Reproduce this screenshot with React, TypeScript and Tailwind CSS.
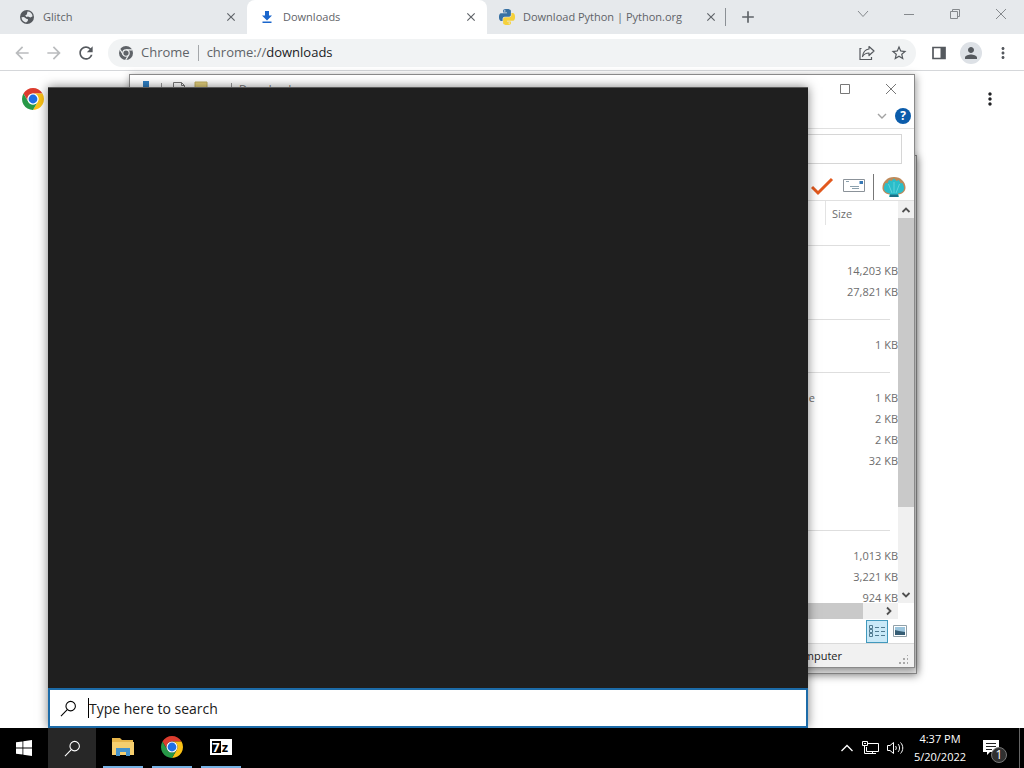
import React from "react";
import {
  MdClose,
  MdAdd,
  MdArrowBack,
  MdArrowForward,
  MdRefresh,
  MdStarBorder,
  MdPerson,
  MdMoreVert,
} from "react-icons/md";

const PYTHON_SNAKE =
  "M14.25.18l.9.2.73.26.59.3.45.32.34.34.25.34.16.33.1.3.04.26.02.2-.01.13V8.5l-.05.63-.13.55-.21.46-.26.38-.3.31-.33.25-.35.19-.35.14-.33.1-.3.07-.26.04-.21.02H8.77l-.69.05-.59.14-.5.22-.41.27-.33.32-.27.35-.2.36-.15.37-.1.35-.07.32-.04.27-.02.21v3.06H3.17l-.21-.03-.28-.07-.32-.12-.35-.18-.36-.26-.36-.36-.35-.46-.32-.59-.28-.73-.21-.88-.14-1.05-.05-1.23.06-1.22.16-1.04.24-.87.32-.71.36-.57.4-.44.42-.33.42-.24.4-.16.36-.1.32-.05.24-.01h.16l.06.01h8.16v-.83H6.18l-.01-2.75-.02-.37.05-.34.11-.31.17-.28.25-.26.31-.23.38-.2.44-.18.51-.15.58-.12.64-.1.71-.06.77-.04.84-.02 1.27.05zm-6.3 1.98l-.23.33-.08.41.08.41.23.34.33.22.41.09.41-.09.33-.22.23-.34.08-.41-.08-.41-.23-.33-.33-.22-.41-.09-.41.09z";

function PythonLogo() {
  return (
    <svg viewBox="0 0 24 24" className="size-4 shrink-0">
      <path fill="#3871a3" d={PYTHON_SNAKE} />
      <path fill="#f5d13c" d={PYTHON_SNAKE} transform="rotate(180 12 12)" />
    </svg>
  );
}

function Globe() {
  return (
    <svg viewBox="0 0 16 16" className="size-4 shrink-0">
      <circle cx="8" cy="8" r="7" fill="#55595e" />
      <path
        fill="#e6e9ec"
        d="M8.500 2.500C11 2.500 13.300 4.500 13.600 7.300L11.500 8.500 9 7.500 7.500 8 6.200 6.500 7.800 5.500zM2.500 8.200L5 8l2.300 1.700L9 10.200 8.800 12 7 13.400C4.400 13 2.600 10.900 2.500 8.200z"
      />
    </svg>
  );
}

function ChromeLogo({ className }: { className: string }) {
  return (
    <svg viewBox="0 0 48 48" className={className}>
      <path fill="#dc3c2e" d="M24 12H44.78A24 24 0 0 0 3.22 12L13.61 30A12 12 0 0 1 24 12Z" />
      <path fill="#fbc116" d="M34.39 30L24 48A24 24 0 0 0 44.78 12H24A12 12 0 0 1 34.39 30Z" />
      <path fill="#279847" d="M13.61 30L3.22 12A24 24 0 0 0 24 48L34.39 30A12 12 0 0 1 13.61 30Z" />
      <circle cx="24" cy="24" r="12" fill="#fff" />
      <circle cx="24" cy="24" r="9.6" fill="#1f6fe5" />
    </svg>
  );
}

function ChromeMono() {
  return (
    <svg viewBox="0 0 48 48" className="size-3.5 shrink-0">
      <circle cx="24" cy="24" r="24" fill="#5f6368" />
      <path d="M24 13H46M14.5 29.5L3 11M33.5 29.5L23 48" stroke="#f1f3f4" strokeWidth="4" />
      <circle cx="24" cy="24" r="11" fill="#5f6368" stroke="#f1f3f4" strokeWidth="4" />
    </svg>
  );
}

function DownloadGlyph() {
  return (
    <svg viewBox="0 0 16 16" className="size-4 shrink-0" fill="#1a66cc">
      <path d="M6 2h4v4.500h3L8 11.500 3 6.500h3zM3.500 12.500h9V14h-9z" />
    </svg>
  );
}

function Magnifier({ className }: { className: string }) {
  return (
    <svg viewBox="0 0 18 18" className={className} fill="none" stroke="currentColor" strokeWidth="1.150">
      <circle cx="11.300" cy="6.500" r="5" />
      <path d="M7.700 10.200L1 17" />
    </svg>
  );
}

const TABS = [
  { title: "Glitch", icon: <Globe />, active: false },
  { title: "Downloads", icon: <DownloadGlyph />, active: true },
  { title: "Download Python | Python.org", icon: <PythonLogo />, active: false },
];

function TabStrip() {
  return (
    <div className="flex h-[34px] bg-[#e6e9ec] pl-[7px] text-[#5f6368]">
      {TABS.map((t) => (
        <div
          key={t.title}
          className={
            t.active
              ? "flex w-60 items-center gap-2 rounded-t-lg bg-white pr-2 pl-3"
              : "flex w-60 items-center gap-2 pr-2 pl-3"
          }
        >
          {t.icon}
          <span className="flex-1 truncate text-[11px]">{t.title}</span>
          <button aria-label={`Close ${t.title}`} className="flex size-4 items-center justify-center">
            <MdClose className="size-[14px]" />
          </button>
        </div>
      ))}
      <div className="my-2 -ml-0.5 w-px bg-[#8b9095]" />
      <button aria-label="New tab" className="ml-3 flex w-5 items-center justify-center">
        <MdAdd className="size-5" />
      </button>
      <div className="ml-auto flex h-7 text-[#85898d]">
        <button aria-label="Search tabs" className="flex w-[46px] items-center justify-center">
          <svg viewBox="0 0 12 12" className="size-3" fill="none" stroke="currentColor">
            <path d="M1 3l5 5.500L11 3" />
          </svg>
        </button>
        <button aria-label="Minimize" className="flex w-[46px] items-center justify-center">
          <svg viewBox="0 0 12 12" className="size-3" stroke="currentColor">
            <path d="M1 6.500h10" />
          </svg>
        </button>
        <button aria-label="Restore" className="flex w-[46px] items-center justify-center">
          <svg viewBox="0 0 12 12" className="size-3" fill="none" stroke="currentColor">
            <path d="M1.500 3.500h7v7h-7zM3.500 3.500v-2h7v7h-2" />
          </svg>
        </button>
        <button aria-label="Close window" className="flex w-[46px] items-center justify-center">
          <svg viewBox="0 0 12 12" className="size-3" stroke="currentColor">
            <path d="M1 1l10 10M11 1L1 11" />
          </svg>
        </button>
      </div>
    </div>
  );
}

function Toolbar() {
  return (
    <div className="flex h-[37px] items-center border-b border-[#d5d7da] bg-white pt-px pr-3 pl-3 text-[#55595e]">
      <button aria-label="Back" className="mr-3 text-[#babcbe]">
        <MdArrowBack className="size-5" />
      </button>
      <button aria-label="Forward" className="mr-3 text-[#babcbe]">
        <MdArrowForward className="size-5" />
      </button>
      <button aria-label="Reload" className="mr-3">
        <MdRefresh className="size-5" />
      </button>
      <div className="flex h-7 flex-1 items-center rounded-full bg-[#f1f3f4] pr-2 pl-[11px] text-[13px]">
        <ChromeMono />
        <span className="ml-2 text-[#5f6368]">Chrome</span>
        <span className="mx-2 h-4 w-px bg-[#a4a7aa]" />
        <span className="text-[#5f6368]">
          chrome://<span className="text-[#202124]">downloads</span>
        </span>
        <button aria-label="Share" className="mr-3.5 ml-auto">
          <svg viewBox="0 0 18 18" className="size-[18px]" fill="none" stroke="currentColor" strokeWidth="1.200">
            <path d="M3.500 4.500H2v11h11.500V13" />
            <path d="M11 2.500l5 4.500-5 4.500V9C8 9 6 10 4.500 12.500 5 8.500 7 5.500 11 5z" strokeLinejoin="round" />
          </svg>
        </button>
        <button aria-label="Bookmark">
          <MdStarBorder className="size-[18px]" />
        </button>
      </div>
      <button aria-label="Side panel" className="ml-3.5">
        <svg viewBox="0 0 18 18" className="size-[18px]">
          <path d="M3 3.500h12v11H3z" fill="none" stroke="currentColor" strokeWidth="1.700" />
          <path d="M10.500 3.500H15v11h-4.500z" fill="currentColor" />
        </svg>
      </button>
      <button
        aria-label="Profile"
        className="ml-3 flex size-[22px] items-center justify-center rounded-full bg-[#dde1e6]"
      >
        <MdPerson className="size-[18px]" />
      </button>
      <button aria-label="Menu" className="ml-3">
        <MdMoreVert className="size-[18px]" />
      </button>
    </div>
  );
}

type Row = { line: true } | { line?: false; type?: string; size?: string };

const ROWS: Row[] = [
  { line: true },
  { size: "14,203 KB" },
  { size: "27,821 KB" },
  { line: true },
  { size: "1 KB" },
  { line: true },
  { type: "e", size: "1 KB" },
  { size: "2 KB" },
  { size: "2 KB" },
  { size: "32 KB" },
  {},
  {},
  { line: true },
  { size: "1,013 KB" },
  { size: "3,221 KB" },
  { size: "924 KB" },
];

function FileList() {
  return (
    <table className="w-full table-fixed border-collapse text-[11px] text-[#6d6d6d]">
      <thead>
        <tr className="h-[27px]">
          <th aria-label="Type" />
          <th className="w-[73px] p-0 text-left align-top font-normal">
            <div className="h-6 border-l border-[#e3e3e3] pl-1.5 leading-[26px]">Size</div>
          </th>
        </tr>
      </thead>
      <tbody>
        {ROWS.map((r, i) =>
          r.line ? (
            <tr key={i} className="h-8">
              <td colSpan={2} className="p-0 pt-0.5 pr-2">
                <div className="h-px bg-[#dedede]" />
              </td>
            </tr>
          ) : (
            <tr key={i} className="h-[21px]">
              <td className="p-0 pr-2.5 text-right leading-3">{r.type}</td>
              <td className="p-0 text-right leading-3 whitespace-nowrap">{r.size}</td>
            </tr>
          )
        )}
      </tbody>
    </table>
  );
}

function ExplorerWindow() {
  return (
    <section
      aria-label="Downloads folder"
      className="absolute top-[74px] right-[109px] left-[129px] flex h-[594px] flex-col border border-[#8a8a8a] bg-white shadow-[1px_2px_8px_rgba(0,0,0,0.4)]"
    >
      <header className="flex h-7 items-center pl-2.5 text-[#777]">
        <svg viewBox="0 0 93 16" className="h-4 w-[93px]">
          <path d="M3 0h6v14H3z" fill="#2e7fc4" />
          <path d="M21.500 2v12M91.500 2v12" stroke="#999" />
          <path d="M33.500 1.500h8l3 3v11h-11zM41.500 1.500v3h3" fill="#fff" stroke="#777" />
          <path d="M55 1h12v12H55z" fill="#e3cf7b" stroke="#c0ae60" />
        </svg>
        <span className="ml-1.5 text-[11px] leading-4">Downloads</span>
        <button aria-label="Maximize" className="ml-auto flex w-[46px] justify-center">
          <svg viewBox="0 0 12 12" className="size-3" fill="none" stroke="currentColor">
            <path d="M1.500 1.500h9v9h-9z" />
          </svg>
        </button>
        <button aria-label="Close" className="flex w-[46px] justify-center">
          <svg viewBox="0 0 12 12" className="size-3" stroke="currentColor">
            <path d="M1 1l10 10M11 1L1 11" />
          </svg>
        </button>
      </header>
      <div className="flex h-[26px] items-center justify-end gap-2 border-b border-[#e0e0e0] pr-[3px]">
        <button aria-label="Expand ribbon">
          <svg viewBox="0 0 10 10" className="size-2.5" fill="none" stroke="#a2a2a2" strokeWidth="1.400">
            <path d="M1 3l4 4 4-4" />
          </svg>
        </button>
        <button
          aria-label="Help"
          className="flex size-4 items-center justify-center rounded-full bg-[#0b5cab] text-[12px] font-bold text-white"
        >
          ?
        </button>
      </div>
      <div className="pt-[5px] pr-3">
        <input aria-label="Search Downloads" className="block h-[30px] w-full border border-[#d6d6d6]" />
      </div>
      <div className="flex h-[37px] items-end justify-end border-b border-[#e0e0e0] pr-2">
        <button aria-label="Properties" className="mr-2 mb-1">
          <svg viewBox="0 0 24 20" className="h-5 w-6">
            <path d="M1 11l6 6L21 3" fill="none" stroke="#e2591e" strokeWidth="3" />
          </svg>
        </button>
        <button aria-label="Rename" className="mr-2 mb-1.5">
          <svg viewBox="0 0 22 16" className="h-4 w-[22px]">
            <path d="M.5 1.500h21v12H.5z" fill="#fff" stroke="#8b9299" />
            <path d="M3 3.500h3M7 8.500h9M9 10.500h7" stroke="#8ba0ad" />
            <path d="M16.500 3h3.500v3h-3.500z" fill="#3778b5" />
          </svg>
        </button>
        <div className="mr-2 h-[26px] w-px self-end bg-[#777]" />
        <button aria-label="Classic shell" className="mb-0.5">
          <svg viewBox="0 0 24 22" className="h-[22px] w-6">
            <path
              d="M7 21l1-2.500C3 18 0 15 .5 11 .8 6 5 1 12 1s11.200 5 11.500 10c.3 4-2.500 7-7.500 7.500l1 2.500z"
              fill="#bd8a5a"
            />
            <path
              d="M7 21l1-3.500C4 17 1.500 14.500 2 11l1.500-4 2 .2L7 4l2.500 1L12 2.500 14.500 5 17 4l1.500 3.200 2-.2L22 11c.5 3.500-2 6-6 6.500l1 3.500z"
              fill="#2bbdc9"
            />
            <path d="M12 17V6M10 17L6.500 8M14 17l3.500-9" stroke="#5fd3dc" fill="none" />
            <path d="M8 18.500h8V21H8z" fill="#1b7188" />
          </svg>
        </button>
      </div>
      <div className="flex min-h-0 flex-1">
        <div className="flex-1 overflow-hidden">
          <FileList />
        </div>
        <div className="flex w-4 flex-col items-center bg-[#f0f0f0]">
          <svg viewBox="0 0 10 17" className="h-[17px] w-2.5" fill="none" stroke="#505050" strokeWidth="1.800">
            <path d="M1.500 11L5 7.500 8.500 11" />
          </svg>
          <div className="h-[289px] w-full bg-[#c9c9c9]" />
          <svg viewBox="0 0 10 17" className="mt-auto h-[17px] w-2.5" fill="none" stroke="#505050" strokeWidth="1.800">
            <path d="M1.500 7L5 10.500 8.500 7" />
          </svg>
        </div>
      </div>
      <div className="mr-4 flex h-4 items-center justify-end bg-[#f0f0f0]">
        <div className="mr-[19px] h-full flex-1 bg-[#c9c9c9]" />
        <svg viewBox="0 0 16 16" className="size-4" fill="none" stroke="#505050" strokeWidth="1.800">
          <path d="M5 4.500L8.500 8 5 11.500" />
        </svg>
      </div>
      <div className="flex h-6 items-center justify-end gap-1 pr-[7px]">
        <button
          aria-label="Details view"
          className="flex h-[23px] w-[22px] items-center justify-center border border-[#4299bd] bg-[#c9e9f8]"
        >
          <svg viewBox="0 0 18 14" className="h-3.5 w-[18px]" fill="none" stroke="#507b91">
            <path d="M1.500 1.500h3v3h-3zM1.500 5.500h3v3h-3zM1.500 9.500h3v3h-3zM7 3.500h4M7 7.500h4M7 11.500h4M13 3.500h4M13 7.500h4M13 11.500h4" />
          </svg>
        </button>
        <button aria-label="Icon view" className="flex w-[15px] justify-center">
          <svg viewBox="0 0 14 12" className="h-3 w-3.5">
            <path d="M.5.5h13v11H.5z" fill="#fff" stroke="#91a0a8" />
            <path d="M2 2h10v8H2z" fill="#9cc5dd" />
            <path d="M2 5l4 1 6 1v3H2z" fill="#365d74" />
          </svg>
        </button>
      </div>
      <footer className="flex h-6 items-center border-t border-[#dadada] bg-[#f1f1f1] text-[11px] text-[#222]">
        <span className="ml-auto pt-px pr-14">Computer</span>
        <svg viewBox="0 0 12 12" className="mt-2 mr-1 size-3" fill="#a9a9a9">
          <path d="M9 1h1v1H9zM9 4h1v2H9zM9 8h1v2H9zM5 4h2v2H5zM5 8h2v2H5zM1 8h2v2H1z" />
        </svg>
      </footer>
    </section>
  );
}

function SearchPanel() {
  return (
    <section
      aria-label="Search"
      className="absolute top-[87px] right-[216px] bottom-0 left-12 flex flex-col border-t border-[#5a5a5a] bg-[#1f1f1f] shadow-[0_0_10px_rgba(0,0,0,0.5)]"
    >
      <div className="flex-1" />
      <label className="flex h-10 items-center border-2 border-[#1c6ba8] bg-white pl-2.5 text-black">
        <Magnifier className="size-[17px]" />
        <span className="ml-[11px] h-5 w-px bg-black" />
        <input
          aria-label="Type here to search"
          placeholder="Type here to search"
          className="min-w-0 flex-1 text-[14px] outline-none placeholder:text-[#1a1a1a]"
        />
      </label>
    </section>
  );
}

function Taskbar() {
  return (
    <footer className="flex h-10 shrink-0 bg-black text-white">
      <button aria-label="Start" className="flex w-12 items-center justify-center">
        <svg viewBox="0 0 16 16" className="size-4" fill="#fff">
          <path d="M0 2.300l6.500-.9v6.200H0zM7.300 1.300L16 0v7.600H7.300zM0 8.400h6.500v6.200L0 13.700zM7.300 8.400H16V16l-8.700-1.300z" />
        </svg>
      </button>
      <button aria-label="Search" className="mr-0.5 flex w-12 items-center justify-center bg-[#272727]">
        <Magnifier className="size-[17px]" />
      </button>
      <button aria-label="File Explorer" className="flex w-[49px] flex-col items-center">
        <span className="flex flex-1 items-center">
          <svg viewBox="0 0 22 20" className="h-5 w-[22px]">
            <path d="M0 1h8l2 2h11v15H0z" fill="#e8b64a" />
            <path d="M0 5h22v13H0z" fill="#f6cf6f" />
            <path d="M4 11h14v8h-4v-4H8v4H4z" fill="#4593cc" />
          </svg>
        </span>
        <span className="h-0.5 w-10 bg-[#76b1e4]" />
      </button>
      <button aria-label="Google Chrome" className="flex w-[49px] flex-col items-center">
        <span className="flex flex-1 items-center">
          <ChromeLogo className="size-[22px]" />
        </span>
        <span className="h-0.5 w-10 bg-[#76b1e4]" />
      </button>
      <button aria-label="7-Zip" className="flex w-[49px] flex-col items-center">
        <span className="flex flex-1 items-center">
          <span className="flex h-4 w-[22px] items-stretch border-2 border-white bg-white leading-3 font-bold">
            <span className="flex-1 bg-black text-center text-[13px] text-white">7</span>
            <span className="flex-1 text-center text-[13px] text-black">z</span>
          </span>
        </span>
        <span className="h-0.5 w-10 bg-[#76b1e4]" />
      </button>
      <div className="ml-auto flex items-center">
        <button aria-label="Show hidden icons" className="mr-2">
          <svg viewBox="0 0 14 14" className="size-3.5" fill="none" stroke="#fff" strokeWidth="1.300">
            <path d="M1.500 10L7 4.500 12.500 10" />
          </svg>
        </button>
        <button aria-label="Network" className="mr-2">
          <svg viewBox="0 0 17 16" className="h-4 w-[17px]" fill="none" stroke="#fff">
            <path d="M5.500 3.500h11v8H4.500V7M10.500 11.500v2M6 13.500h8M.5 1.500h5v4h-5zM2.500 5.500v8h4M2 3.500h2" />
          </svg>
        </button>
        <button aria-label="Volume">
          <svg viewBox="0 0 17 16" className="h-4 w-[17px]" fill="none" stroke="#fff">
            <path d="M.5 5.500h2.500l3.500-3v11l-3.500-3H.5zM8.500 6c1 1 1 3 0 4M11 4c2 2 2 6 0 8M13.500 2.500c3 3 3 8 0 11" />
          </svg>
        </button>
        <div className="flex w-[72px] flex-col text-center text-[11px] leading-[18px]">
          <span>4:37 PM</span>
          <span>5/20/2022</span>
        </div>
        <button aria-label="Notifications" className="relative mr-[11px] ml-1 h-6 w-7">
          <svg viewBox="0 0 28 24" className="h-6 w-7">
            <path d="M3 4h16v12h-9l-3 3v-3H3z" fill="#fff" />
            <path d="M6 7.500h10M6 10.500h10M6 13.500h6" stroke="#222" />
          </svg>
          <span className="absolute top-[11px] left-[11px] flex size-4 items-center justify-center rounded-full border border-[#777] bg-[#303030] text-[12px]">
            1
          </span>
        </button>
        <div className="mr-1 h-10 w-px bg-[#666]" />
      </div>
    </footer>
  );
}

export default function App() {
  return (
    <div className="flex h-screen flex-col overflow-hidden bg-white font-['Open_Sans','Noto_Sans',sans-serif]">
      <main className="relative flex-1 overflow-hidden">
        <TabStrip />
        <Toolbar />
        <div className="flex items-start justify-between pt-[17px] pr-6 pl-[22px]">
          <ChromeLogo className="size-[22px]" />
          <button aria-label="More actions" className="text-[#202124]">
            <MdMoreVert className="mt-px size-5" />
          </button>
        </div>
        <div className="absolute top-[155px] right-[107px] left-[129px] h-[519px] border border-[#8a8a8a] bg-[#e2e2e2] shadow-[1px_2px_8px_rgba(0,0,0,0.4)]" />
        <ExplorerWindow />
        <SearchPanel />
      </main>
      <Taskbar />
    </div>
  );
}
